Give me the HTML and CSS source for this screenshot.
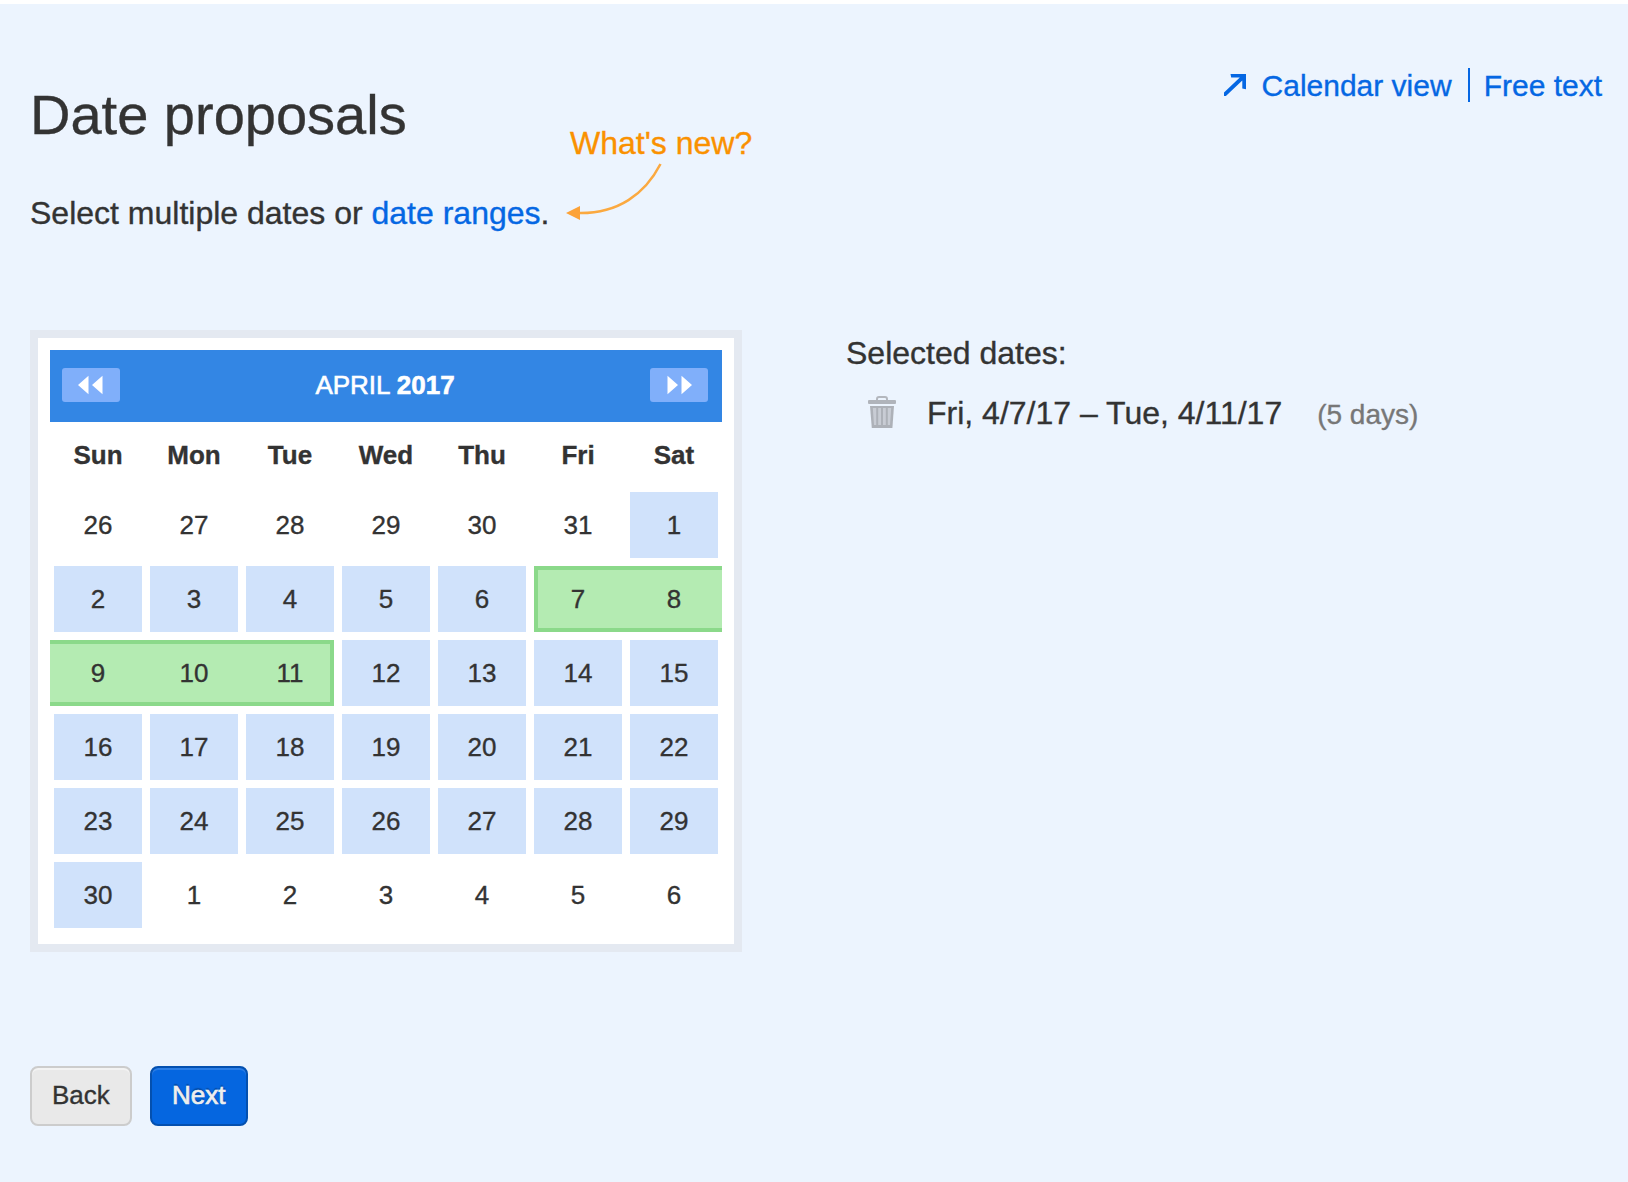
FILE: index.html
```html
<!DOCTYPE html>
<html lang="en">
<head>
<meta charset="utf-8">
<title>Date proposals</title>
<link rel="stylesheet" href="styles.css">
</head>
<body>
<main class="page">
  <header class="page-header">
    <div class="intro">
      <h1 class="title">Date proposals</h1>
      <p class="subtitle">Select multiple dates or <a class="link" href="#">date ranges</a>.</p>
      <div class="hint">
        <span class="hint-text">What's new?</span>
        <svg class="hint-arrow" width="100" height="60" viewBox="0 0 100 60">
          <path d="M94.5 4C79 34 52 54 12 53" fill="none" stroke="#fba940" stroke-width="2.5"/>
          <path d="M0 53L14 46V60Z" fill="#fca238"/>
        </svg>
      </div>
    </div>
    <nav class="views">
      <a class="view-link" href="#"><svg class="view-icon" width="24" height="24" viewBox="0 0 24 24"><path d="M6.5 2H22V17.3L18.3 16.5V8.4L1.9 24H0V20.4L15.8 5.4H7.2Z" fill="#0567e3"/></svg>Calendar view</a>
      <a class="view-link view-link-divided" href="#">Free text</a>
    </nav>
  </header>

  <div class="columns">
    <section class="calendar">
      <div class="month-bar">
        <button class="month-nav" aria-label="Previous month"><svg width="26" height="20" viewBox="0 0 26 20"><path d="M0 10L10.5 .8V19.2ZM14 10L24.5 .8V19.2Z" fill="#fff"/></svg></button>
        <div class="month-name">APRIL <b>2017</b></div>
        <button class="month-nav" aria-label="Next month"><svg width="26" height="20" viewBox="0 0 26 20"><path d="M1.5 .8L12 10L1.5 19.2ZM15.5 .8L26 10L15.5 19.2Z" fill="#fff"/></svg></button>
      </div>
      <div class="grid weekdays"><span>Sun</span><span>Mon</span><span>Tue</span><span>Wed</span><span>Thu</span><span>Fri</span><span>Sat</span></div>
      <div class="grid days">
        <span class="day">26</span><span class="day">27</span><span class="day">28</span><span class="day">29</span><span class="day">30</span><span class="day">31</span><span class="day open">1</span>
        <span class="day open">2</span><span class="day open">3</span><span class="day open">4</span><span class="day open">5</span><span class="day open">6</span><span class="day picked range-start">7</span><span class="day picked">8</span>
        <span class="day picked">9</span><span class="day picked">10</span><span class="day picked range-end">11</span><span class="day open">12</span><span class="day open">13</span><span class="day open">14</span><span class="day open">15</span>
        <span class="day open">16</span><span class="day open">17</span><span class="day open">18</span><span class="day open">19</span><span class="day open">20</span><span class="day open">21</span><span class="day open">22</span>
        <span class="day open">23</span><span class="day open">24</span><span class="day open">25</span><span class="day open">26</span><span class="day open">27</span><span class="day open">28</span><span class="day open">29</span>
        <span class="day open">30</span><span class="day">1</span><span class="day">2</span><span class="day">3</span><span class="day">4</span><span class="day">5</span><span class="day">6</span>
      </div>
    </section>

    <section class="selection">
      <h2 class="selection-title">Selected dates:</h2>
      <div class="selection-row">
        <svg class="trash" width="28" height="32" viewBox="0 0 28 32">
          <path d="M9 4.5V3Q9 1 11 1H17Q19 1 19 3V4.5" fill="none" stroke="#b3b7be" stroke-width="2"/>
          <rect y="4" width="28" height="4" rx="1" fill="#b0b4bb"/>
          <path d="M2 10H26L24.4 32H3.8Z" fill="#adb1b8"/>
          <path d="M4.8 12H8.2V29H6ZM10.2 12H13V29H10.2ZM15 12H17.8V29H15ZM19.8 12H23.2L22 29H19.8Z" fill="#c8ccd4"/>
        </svg>
        <span class="selection-range">Fri, 4/7/17 – Tue, 4/11/17</span>
        <span class="selection-length">(5 days)</span>
      </div>
    </section>
  </div>

  <footer class="actions">
    <button class="button">Back</button>
    <button class="button primary">Next</button>
  </footer>
</main>
</body>
</html>
```
FILE: styles.css
```css
* { box-sizing: border-box; }

body {
  margin: 0;
  padding-top: 4px;
  background: #fff;
  color: #333;
  font-family: "Liberation Sans", Arial, sans-serif;
  -webkit-text-stroke: .35px currentColor;
}

.page {
  height: 1178px;
  padding: 64px 26px 0 30px;
  background: #ecf4fe;
}

.page-header { display: flex; justify-content: space-between; align-items: flex-start; }
.intro { position: relative; padding-top: 15px; }
.title { margin: 0; font-size: 56px; font-weight: 400; line-height: 63px; }
.subtitle { margin: 49px 0 0; font-size: 32px; line-height: 36px; white-space: nowrap; }
.link { color: #0567e3; text-decoration: none; }

.hint { position: absolute; left: 536px; top: 57px; white-space: nowrap; }
.hint-text { display: block; margin-left: 4px; color: #fa9100; font-size: 32px; line-height: 36px; }
.hint-arrow { display: block; margin-top: -1px; }

.views { display: flex; gap: 16px; font-size: 30px; line-height: 33px; }
.view-link { display: flex; height: 34px; padding-top: 1px; color: #0567e3; text-decoration: none; }
.view-link-divided { padding-left: 14px; border-left: 2px solid #0567e3; }
.view-icon { margin: 3px 14px 0 0; }

.columns { display: flex; gap: 104px; margin-top: 99px; }

.calendar { width: 712px; padding: 12px; border: 8px solid #e4e9f1; background: #fff; font-size: 26px; }
.month-bar {
  display: flex;
  justify-content: space-between;
  height: 72px;
  padding: 18px 14px 0 12px;
  background: #3386e4;
  color: #fff;
}
.month-name { margin-top: -18px; line-height: 70px; -webkit-text-stroke: .6px #fff; }
.month-nav {
  display: flex;
  justify-content: center;
  align-items: center;
  width: 58px;
  height: 34px;
  padding: 0;
  border: 0;
  border-radius: 3px;
  background: #80affa;
}

.grid { display: grid; grid-template-columns: repeat(7, 96px); text-align: center; }
.weekdays { font-weight: 700; line-height: 66px; }
.day { height: 66px; margin: 4px; line-height: 66px; }
.open { background: #d0e2fb; }
.picked {
  margin: 4px 0;
  background: #b4ebb2;
  box-shadow: inset 0 4px #8bd98a, inset 0 -4px #8bd98a;
}
.range-start { margin-left: 4px; padding-right: 8px; border-left: 4px solid #8bd98a; }
.range-end { margin-right: 4px; padding-left: 8px; border-right: 4px solid #8bd98a; }

.selection { padding-top: 5px; }
.selection-title { margin: 0; font-size: 32px; font-weight: 400; line-height: 36px; }
.selection-row { display: flex; align-items: baseline; margin: 24px 0 0 22px; line-height: 36px; }
.trash { align-self: flex-start; margin: 1px 31px 0 0; }
.selection-range { font-size: 32px; }
.selection-length { margin-left: 35px; color: #777; font-size: 28px; }

.actions { display: flex; gap: 18px; margin-top: 114px; }
.button {
  height: 60px;
  padding: 0 20px 2px;
  border: 2px solid #ccc;
  border-radius: 8px;
  background: #e9e9e9;
  box-shadow: inset 0 2px #f3f3f3;
  color: #333;
  font: 26px/54px "Liberation Sans", Arial, sans-serif;
  -webkit-text-stroke: .35px currentColor;
}
.primary {
  width: 98px;
  border-color: #0450af;
  background: #0566e0;
  box-shadow: inset 0 2px #2b7de5;
  color: #eee;
  text-shadow: 0 -2px 1px rgba(0, 0, 0, .25);
  -webkit-text-stroke: .7px #eee;
}
```
